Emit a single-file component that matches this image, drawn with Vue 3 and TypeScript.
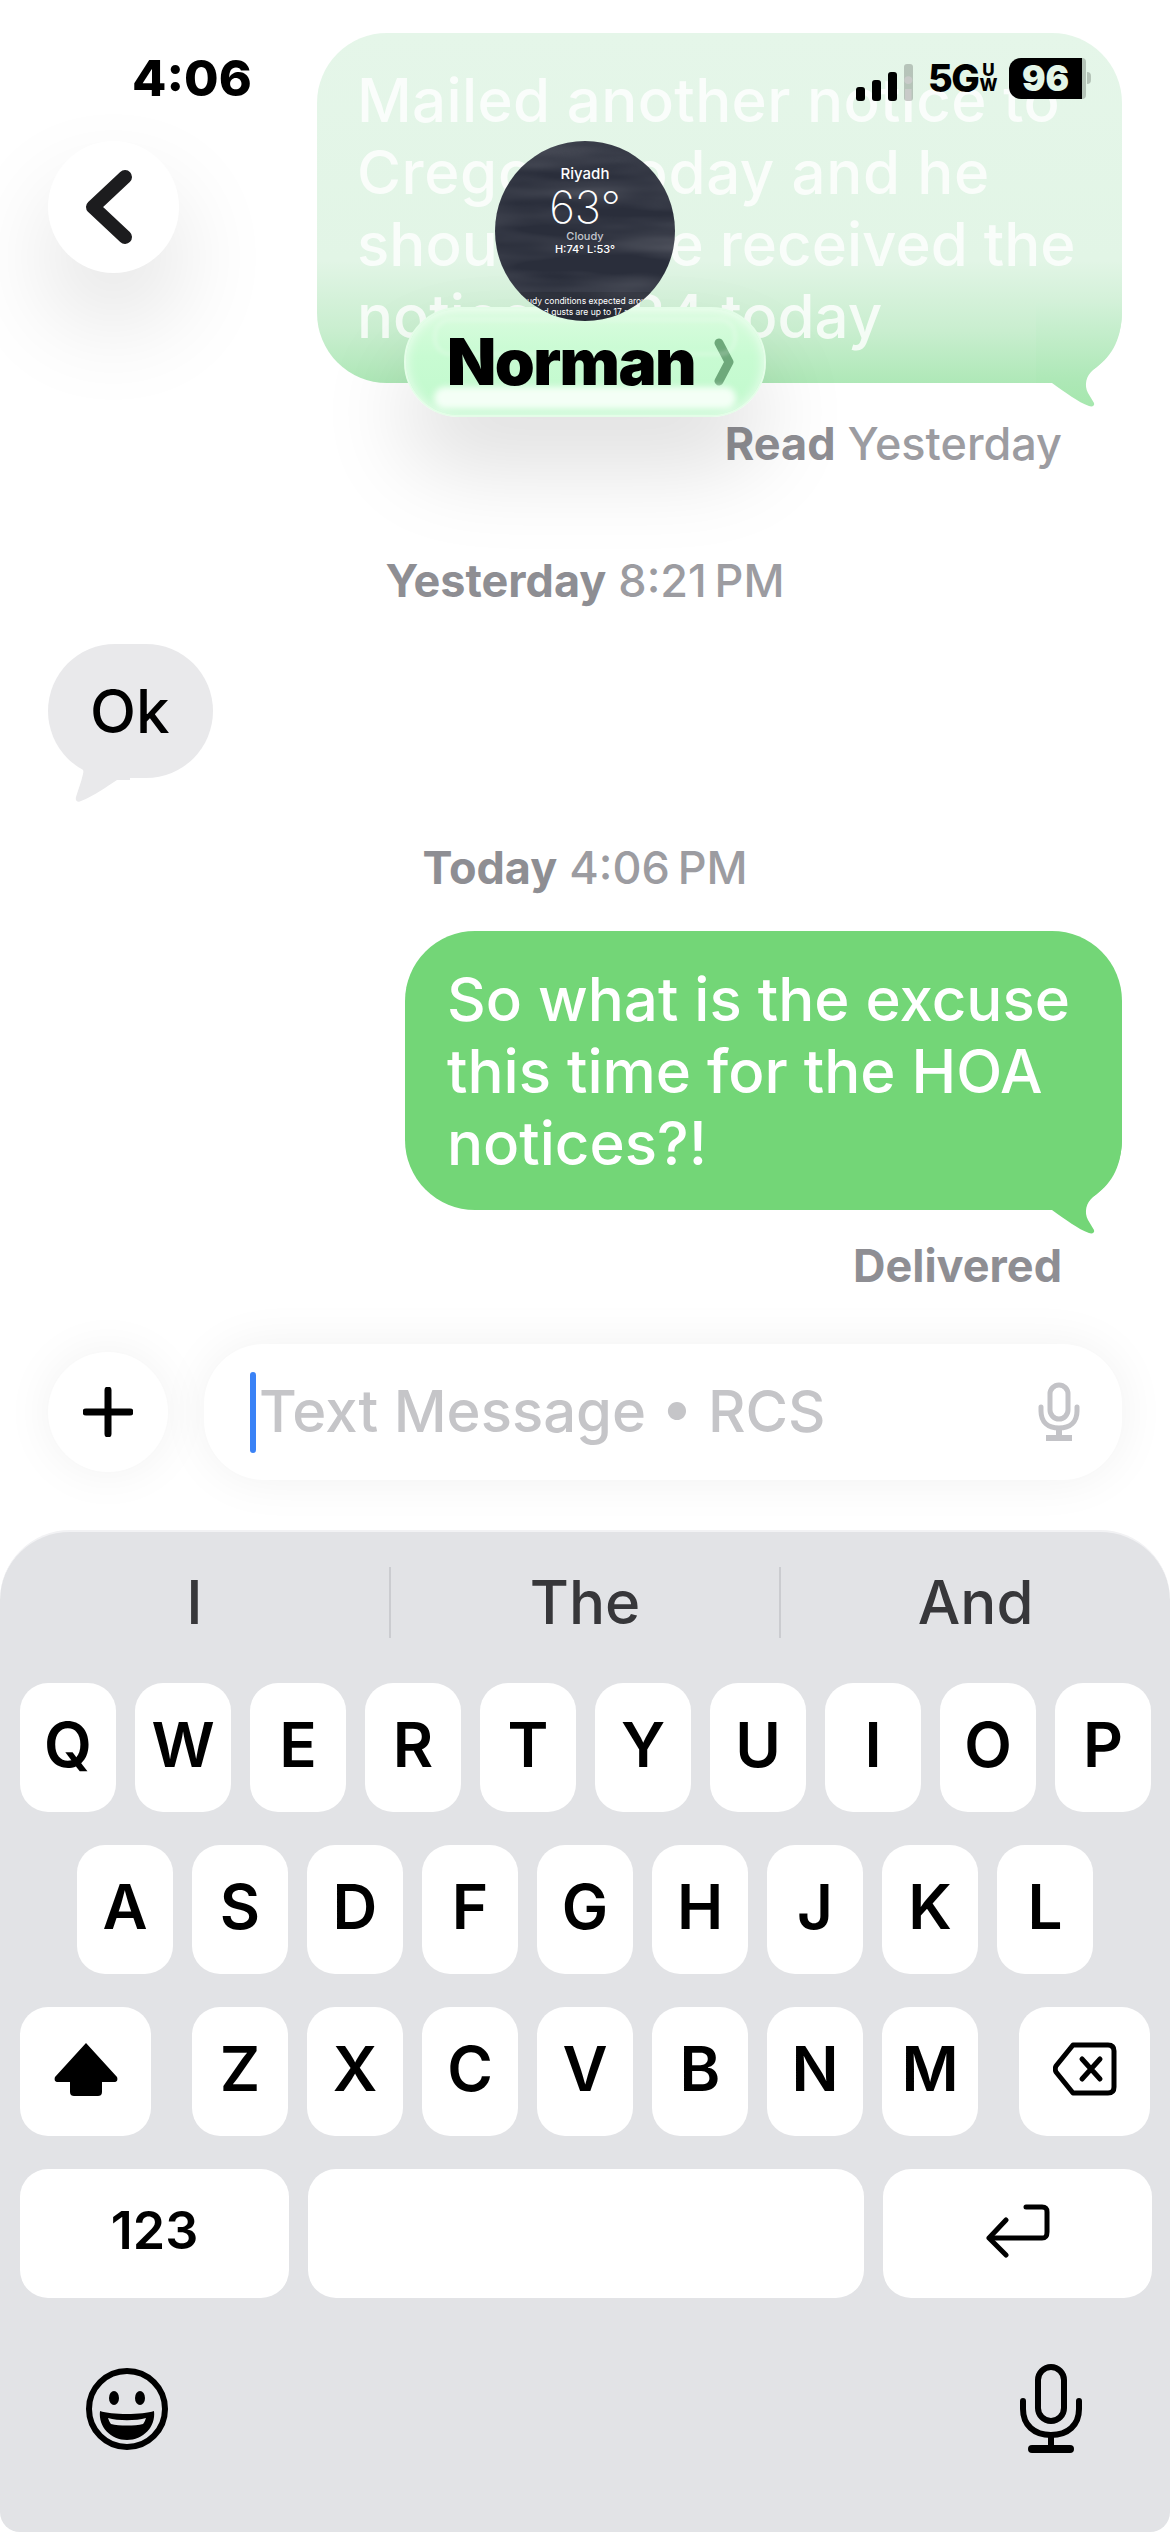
<script setup lang="ts">
const rowOne = ['Q', 'W', 'E', 'R', 'T', 'Y', 'U', 'I', 'O', 'P']
const rowTwo = ['A', 'S', 'D', 'F', 'G', 'H', 'J', 'K', 'L']
const rowThree = ['Z', 'X', 'C', 'V', 'B', 'N', 'M']
const suggestions = ['I', 'The', 'And']
</script>

<template>
  <div class="page">
    <div class="chat">
      <div class="bubble sent faded">
        <svg class="tail-right" viewBox="0 0 90 110">
          <linearGradient id="fade" x1="0" y1="0" x2="0" y2="1">
            <stop offset="0" stop-color="#d2f1d8" />
            <stop offset="0.73" stop-color="#aee8b7" />
            <stop offset="1" stop-color="#a6e7ae" />
          </linearGradient>
          <path fill="url(#fade)" d="M86 0V10C85 40 74 55 57 67C50 73 48 82 52 90L58 100C59 103 56 104 53 103C42 99 30 90 16 80H0V0Z" />
        </svg>
        <p><span class="wide-one">Mailed another notice to</span> <span class="wide-two">Cregory today and he</span> should have received the notice 0084 today</p>
      </div>
      <div class="receipt read"><b>Read</b> Yesterday</div>

      <div class="stamp first"><b>Yesterday</b> 8:21&#8201;PM</div>
      <div class="bubble received">
        <svg class="tail-left" viewBox="0 0 70 55"><path fill="#e9e9eb" d="M18 13C23 17 24 21 23 24C21 33 18 40 16 47C15 51 18 53 21 51C34 46 46 37 57 30H70V0H18Z" /></svg>
        <p>Ok</p>
      </div>

      <div class="stamp second"><b>Today</b> 4:06&#8201;PM</div>
      <div class="bubble sent solid">
        <svg class="tail-right" viewBox="0 0 90 110"><path fill="#73d677" d="M86 0V10C85 40 74 55 57 67C50 73 48 82 52 90L58 100C59 103 56 104 53 103C42 99 30 90 16 80H0V0Z" /></svg>
        <p>So what is the excuse this time for the HOA notices?!</p>
      </div>
      <div class="receipt delivered"><b>Delivered</b></div>
    </div>

    <div class="composer">
      <div class="plus">
        <svg width="50" height="50" viewBox="0 0 50 50"><path d="M25 3V47M3 25H47" stroke="#000" stroke-width="7" stroke-linecap="round" /></svg>
      </div>
      <div class="field">
        <span class="caret"></span>
        <span class="placeholder">Text Message • RCS</span>
        <svg class="field-mic" width="42" height="60" viewBox="0 0 42 60" fill="none" stroke="#c3c3c7" stroke-width="5">
          <rect x="12" y="3" width="18" height="34" rx="9" />
          <path d="M3 25V29C3 40 10 46 21 46C32 46 39 40 39 29V25" stroke-linecap="round" />
          <path d="M21 46V55M8 56H34" stroke-width="6" />
        </svg>
      </div>
    </div>

    <div class="keyboard">
      <div class="suggestions">
        <span v-for="word in suggestions" :key="word" class="suggestion">{{ word }}</span>
      </div>
      <div class="row">
        <div v-for="key in rowOne" :key="key" class="key">{{ key }}</div>
      </div>
      <div class="row center">
        <div v-for="key in rowTwo" :key="key" class="key">{{ key }}</div>
      </div>
      <div class="row">
        <div class="key action shift">
          <svg width="64" height="54" viewBox="0 0 64 54"><path fill="#000" d="M32 1L63 35C64 38 63 40 60 40H48V50C48 53 46 54 44 54H20C18 54 16 53 16 50V40H4C1 40 0 38 1 35Z" /></svg>
        </div>
        <div v-for="key in rowThree" :key="key" class="key">{{ key }}</div>
        <div class="key action backspace">
          <svg width="64" height="54" viewBox="0 0 64 54" fill="none" stroke="#000" stroke-width="5">
            <path d="M20 3H55C59 3 61 5 61 9V45C61 49 59 51 55 51H20L3 30C2 28 2 26 3 24Z" stroke-linejoin="round" />
            <path d="M29 17L47 37M47 17L29 37" stroke-linecap="round" />
          </svg>
        </div>
      </div>
      <div class="row">
        <div class="key numbers">123</div>
        <div class="key space"></div>
        <div class="key enter">
          <svg width="64" height="54" viewBox="0 0 64 54" fill="none" stroke="#000" stroke-width="5" stroke-linecap="round" stroke-linejoin="round">
            <path d="M40 3H56C60 3 61 5 61 8V28C61 32 60 34 56 34H4" />
            <path d="M20 16L3 34L20 51" />
          </svg>
        </div>
      </div>
      <div class="tools">
        <svg width="84" height="84" viewBox="0 0 84 84">
          <circle cx="42" cy="42" r="38" fill="none" stroke="#000" stroke-width="6" />
          <ellipse cx="29" cy="31" rx="5" ry="7" fill="#000" />
          <ellipse cx="55" cy="31" rx="5" ry="7" fill="#000" />
          <path fill="#000" d="M15 44C26 48 58 48 69 44C71 60 58 73 42 73C26 73 13 60 15 44Z" />
          <path fill="#e2e3e6" d="M23 51C33 54 51 54 61 51C60 54 59 56 58 57C50 59 34 59 26 57C25 56 24 54 23 51Z" />
        </svg>
        <svg width="62" height="90" viewBox="0 0 62 90" fill="none" stroke="#000" stroke-width="6">
          <rect x="18" y="3" width="26" height="54" rx="13" />
          <path d="M3 37V45C3 61 14 71 31 71C48 71 59 61 59 45V37" stroke-linecap="round" />
          <path d="M31 71V84" />
          <path d="M12 85H50" stroke-width="8" stroke-linecap="round" />
        </svg>
      </div>
    </div>

    <div class="status">
      <span class="time">4:06</span>
      <div class="status-right">
        <div class="signal">
          <i class="bar-one"></i><i class="bar-two"></i><i class="bar-three"></i><i class="bar-four"></i>
        </div>
        <span class="network">5G</span>
        <span class="band"><span>U</span><span>W</span></span>
        <div class="battery"><span>96</span></div>
        <i class="battery-end"></i>
        <i class="battery-nub"></i>
      </div>
    </div>

    <button class="back">
      <svg width="48" height="76" viewBox="0 0 48 76"><path d="M40 8L8 38L40 68" fill="none" stroke="#1c1c1e" stroke-width="14" stroke-linecap="round" stroke-linejoin="round" /></svg>
    </button>

    <div class="name-pill">
      <span class="name">Norman</span>
      <svg width="20" height="48" viewBox="0 0 20 48"><path d="M5 5L15 24L5 43" fill="none" stroke="#6ea97b" stroke-width="9" stroke-linecap="round" stroke-linejoin="round" /></svg>
    </div>

    <div class="avatar">
      <svg class="clouds" width="180" height="180">
        <filter id="streaks"><feTurbulence type="fractalNoise" baseFrequency="0.006 0.035" numOctaves="3" seed="4" /><feColorMatrix values="0 0 0 0 1  0 0 0 0 1  0 0 0 0 1  0.32 0 0 0 -0.1" /></filter>
        <rect width="180" height="180" filter="url(#streaks)" />
      </svg>
      <div class="weather">
        <span class="city">Riyadh</span>
        <span class="temp">63°</span>
        <span class="sky">Cloudy</span>
        <span class="range">H:74° L:53°</span>
      </div>
      <div class="forecast">Cloudy conditions expected around<br />Wind gusts are up to 17 mph</div>
    </div>
  </div>
</template>

<style>
html,
body {
  margin: 0;
  background: #fff;
}
</style>

<style scoped>
.page {
  position: relative;
  display: flex;
  flex-direction: column;
  width: 1170px;
  height: 2532px;
  overflow: hidden;
  background: #fff;
  font-family: Inter, "Liberation Sans", sans-serif;
}

.chat {
  display: flex;
  flex-direction: column;
  padding: 33px 48px 0;
}

.bubble {
  position: relative;
  box-sizing: border-box;
  font-size: 60px;
  line-height: 72px;
  font-weight: 500;
  border-radius: 70px;
}
.bubble p {
  position: relative;
  margin: 0;
}
.sent {
  align-self: flex-end;
  color: #fff;
}
.faded {
  width: 805px;
  height: 350px;
  padding: 31px 40px;
  color: rgba(255, 255, 255, 0.8);
  background: linear-gradient(#e5f6e9 0%, #e2f5e6 65%, #c9eecf 85%, #aee8b7 100%);
}
.wide-one {
  letter-spacing: 0.35px;
}
.wide-two {
  letter-spacing: 0.6px;
}
.solid {
  width: 717px;
  height: 279px;
  margin-top: 38px;
  padding: 32px 42px;
  background: #73d677;
}
.received {
  align-self: flex-start;
  width: 165px;
  height: 134px;
  margin-top: 38px;
  padding: 31px 42px;
  border-radius: 67px;
  color: #000;
  background: #e9e9eb;
}

.tail-right {
  position: absolute;
  right: -4px;
  bottom: -30px;
  width: 90px;
  height: 110px;
}
.tail-left {
  position: absolute;
  left: 12px;
  bottom: -27px;
  width: 70px;
  height: 55px;
}

.receipt,
.stamp {
  font-size: 45px;
  line-height: 50px;
  color: #9c9ca1;
  font-weight: 500;
}
.receipt b,
.stamp b {
  font-weight: 700;
  color: #8e8e93;
}
.receipt {
  align-self: flex-end;
  margin-right: 60px;
}
.read {
  margin-top: 36px;
}
.delivered {
  margin-top: 31px;
}
.stamp {
  align-self: center;
}
.first {
  margin-top: 87px;
}
.second {
  margin-top: 65px;
}

.composer {
  display: flex;
  align-items: center;
  gap: 36px;
  height: 136px;
  margin-top: 53px;
  padding: 0 48px;
}
.plus {
  display: flex;
  flex: none;
  align-items: center;
  justify-content: center;
  width: 120px;
  height: 120px;
  border-radius: 50%;
  background: #fff;
  box-shadow: 0 0 50px rgba(0, 0, 0, 0.06);
}
.field {
  display: flex;
  flex: 1;
  align-items: center;
  height: 136px;
  padding: 0 42px 0 46px;
  border-radius: 60px;
  background: #fff;
  box-shadow: 0 0 50px rgba(0, 0, 0, 0.06);
}
.caret {
  flex: none;
  width: 6px;
  height: 81px;
  border-radius: 3px;
  background: #3a82f6;
}
.placeholder {
  flex: 1;
  margin-left: 3px;
  padding-bottom: 2px;
  font-size: 58px;
  font-weight: 500;
  color: #c5c5c8;
}

.keyboard {
  display: flex;
  flex-direction: column;
  box-sizing: border-box;
  height: 1002px;
  margin-top: 50px;
  padding: 35px 0 0 20px;
  border-top: 2px solid #f2f2f4;
  border-radius: 70px 70px 20px 20px;
  background: #e2e3e6;
}
.suggestions {
  display: flex;
  height: 71px;
  margin: 0 0 45px -20px;
}
.suggestion {
  flex: 1;
  font-size: 60px;
  line-height: 71px;
  text-align: center;
  color: #37373a;
  font-weight: 500;
}
.suggestion + .suggestion {
  border-left: 2px solid #cbccd0;
}
.row {
  display: flex;
  gap: 19px;
  height: 129px;
  margin-bottom: 33px;
}
.center {
  padding-left: 57px;
}
.key {
  display: flex;
  align-items: center;
  justify-content: center;
  box-sizing: border-box;
  width: 96px;
  padding-bottom: 6px;
  border-radius: 28px;
  font-size: 62px;
  font-weight: 600;
  color: #000;
  background: #fff;
}
.action {
  width: 131px;
}
.shift {
  margin-right: 22px;
}
.backspace {
  margin-left: 22px;
}
.numbers {
  width: 269px;
  font-size: 52px;
}
.space {
  width: 556px;
}
.enter {
  width: 269px;
}
.tools {
  display: flex;
  align-items: center;
  justify-content: space-between;
  padding: 33px 88px 0 65px;
}

.status {
  position: absolute;
  top: 50px;
  left: 132px;
  right: 79px;
  display: flex;
  align-items: center;
  justify-content: space-between;
  height: 56px;
}
.time {
  font-size: 50px;
  font-weight: 800;
  color: #000;
}
.status-right {
  display: flex;
  align-items: center;
  height: 56px;
}
.signal {
  display: flex;
  align-items: flex-end;
  gap: 7px;
  height: 37px;
  margin-right: 15px;
  margin-top: 9px;
}
.signal i {
  display: block;
  width: 9px;
  border-radius: 3px;
  background: #000;
}
.bar-one {
  height: 14px;
}
.bar-two {
  height: 21px;
}
.bar-three {
  height: 29px;
}
.signal .bar-four {
  height: 37px;
  background: rgba(0, 0, 0, 0.2);
}
.network {
  width: 47px;
  font-size: 38px;
  font-weight: 800;
  letter-spacing: -1.5px;
  color: #000;
}
.band {
  display: flex;
  flex-direction: column;
  align-items: center;
  width: 17px;
  margin: 0 12px 0 5px;
  font-size: 17px;
  line-height: 15px;
  font-weight: 800;
  color: #000;
}
.battery {
  display: flex;
  align-items: center;
  justify-content: center;
  width: 73px;
  height: 41px;
  border-radius: 12px 0 0 12px;
  font-size: 35px;
  font-weight: 900;
  color: #e3f5e7;
  background: #000;
}
.battery-end {
  width: 4px;
  height: 41px;
  border-radius: 0 10px 10px 0;
  background: #b5c4b8;
}
.battery-nub {
  width: 4px;
  height: 12px;
  margin-left: 1px;
  border-radius: 0 4px 4px 0;
  background: #b5c4b8;
}

.back {
  position: absolute;
  top: 141px;
  left: 48px;
  display: flex;
  align-items: center;
  justify-content: center;
  width: 131px;
  height: 132px;
  padding: 0 10px 0 0;
  border: none;
  border-radius: 50%;
  background: #fff;
  box-shadow: 0 50px 100px rgba(0, 0, 0, 0.12);
}

.avatar {
  position: absolute;
  top: 141px;
  left: 495px;
  width: 180px;
  height: 180px;
  overflow: hidden;
  border-radius: 50%;
  color: #fff;
  background: #2a2e3b;
}
.clouds {
  position: absolute;
  top: 0;
  left: 0;
}
.weather {
  position: relative;
  display: flex;
  flex-direction: column;
  align-items: center;
  padding-top: 23px;
}
.city {
  font-size: 15px;
  line-height: 20px;
  font-weight: 500;
}
.temp {
  font-size: 44px;
  line-height: 46px;
  font-weight: 200;
}
.sky {
  font-size: 11px;
  line-height: 13px;
  color: #c3c6cd;
  font-weight: 500;
}
.range {
  font-size: 11px;
  line-height: 12px;
  font-weight: 500;
}
.forecast {
  position: absolute;
  left: 0;
  right: 0;
  top: 151px;
  padding-top: 4px;
  height: 29px;
  font-size: 8.5px;
  line-height: 11px;
  text-align: center;
  background: rgba(0, 0, 0, 0.12);
}

.name-pill {
  position: absolute;
  top: 307px;
  left: 404px;
  display: flex;
  align-items: center;
  box-sizing: border-box;
  gap: 19px;
  width: 362px;
  height: 110px;
  padding: 0 0 0 41px;
  border: 2px solid #e4fde8;
  border-radius: 55px;
  background: linear-gradient(#dafcdf, #c8fbd2 45%, #c1f9cd);
  box-shadow: 0 50px 90px rgba(0, 0, 0, 0.13), inset 0 0 12px rgba(255, 255, 255, 0.7);
}
.name-pill::before {
  content: "";
  position: absolute;
  left: 28px;
  right: 28px;
  top: 10px;
  height: 32px;
  border-radius: 16px;
  border: 2px solid rgba(255, 255, 255, 0.45);
  filter: blur(2px);
}
.name-pill::after {
  content: "";
  position: absolute;
  left: 28px;
  right: 28px;
  bottom: 6px;
  height: 22px;
  border-radius: 11px;
  background: #f4fff6;
  filter: blur(3px);
}
.name {
  position: relative;
  z-index: 1;
  font-size: 64px;
  line-height: 70px;
  font-weight: 900;
  letter-spacing: -1.5px;
  color: #000;
}
</style>
